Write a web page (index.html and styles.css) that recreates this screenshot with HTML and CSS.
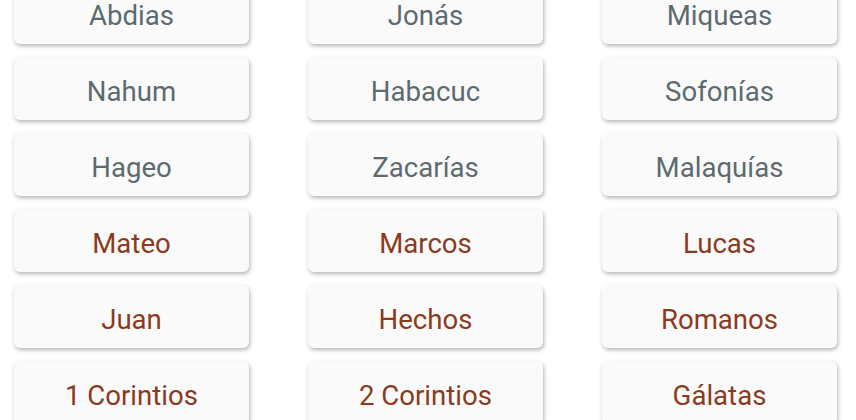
FILE: index.html
```html
<!DOCTYPE html>
<html lang="es">
<head>
  <meta charset="UTF-8">
  <meta name="viewport" content="width=device-width, initial-scale=1.0">
  <title>Libros</title>
  <link rel="stylesheet" href="styles.css">
</head>
<body>

<div id="bookList">
  <div class="book old">Abdias</div>
  <div class="book old">Jonás</div>
  <div class="book old">Miqueas</div>
  <div class="book old">Nahum</div>
  <div class="book old">Habacuc</div>
  <div class="book old">Sofonías</div>
  <div class="book old">Hageo</div>
  <div class="book old">Zacarías</div>
  <div class="book old">Malaquías</div>
  <div class="book new">Mateo</div>
  <div class="book new">Marcos</div>
  <div class="book new">Lucas</div>
  <div class="book new">Juan</div>
  <div class="book new">Hechos</div>
  <div class="book new">Romanos</div>
  <div class="book new">1 Corintios</div>
  <div class="book new">2 Corintios</div>
  <div class="book new">Gálatas</div>
</div>

</body>
</html>
```

FILE: styles.css
```css
body {
  font-family: Roboto, 'Noto Sans', sans-serif;
  background-color: #fff;
  margin: 0;
  height: 420px;
  overflow: hidden;
}

/* list is scrolled a little, first row is cut at the top */
#bookList {
  display: grid;
  grid-template-columns: repeat(3, 235px);
  grid-auto-rows: 63px;
  column-gap: 59px;
  row-gap: 13px;
  padding: 0 14px;
  margin-top: -19px;
}

.book {
  display: flex;
  align-items: center;
  justify-content: center;
  padding-top: 6px;
  box-sizing: border-box;
  background-color: #fafafa;
  border-radius: 6px;
  box-shadow: 1px 2px 4px rgba(0, 0, 0, 0.3);
  font-size: 27.6px;
}

.old {
  color: #5d6b6f;
}

.new {
  color: #8b3b1d;
}
```
